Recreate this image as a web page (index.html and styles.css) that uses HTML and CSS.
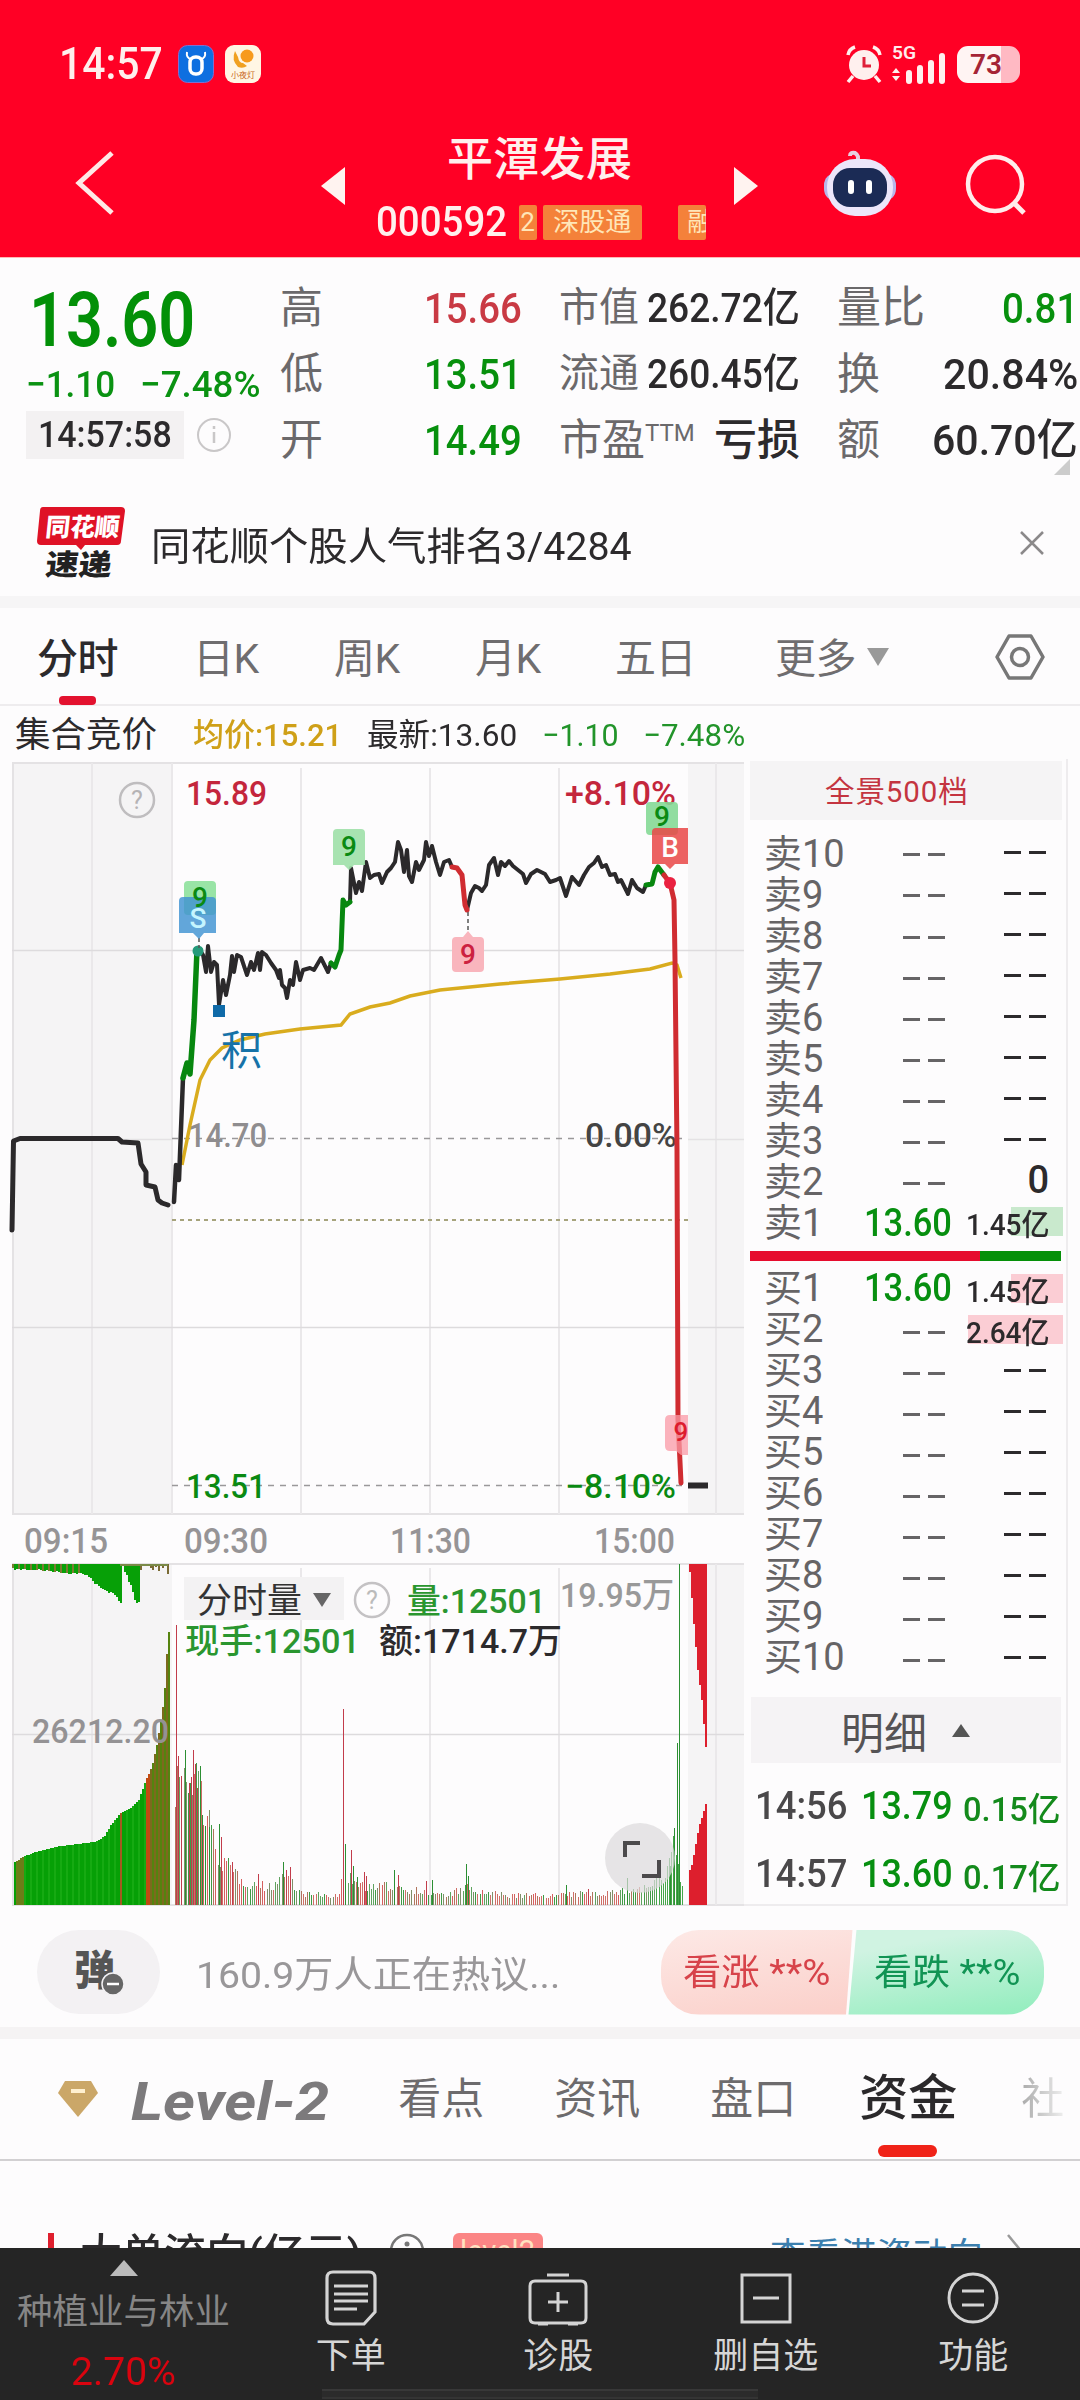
FILE: index.html
```html
<!DOCTYPE html>
<html lang="zh-CN">
<head>
<meta charset="utf-8">
<title>平潭发展 000592</title>
<link rel="stylesheet" href="styles.css">
</head>
<body>
<div class="app">
  <header class="top">
    <div class="status">
      <span class="clock" data-w="104">14:57</span>
      <svg class="app-ico" width="36" height="38" viewBox="0 0 36 38"><rect x=".5" y=".5" width="35" height="37" rx="9" fill="#0e6fe0" stroke="#7f6fd0"/><path d="M9 7q-1 6 4 7M27 7q1 6-4 7" fill="none" stroke="#fff" stroke-width="2"/><rect x="12" y="12" width="12" height="17" rx="5.500" fill="none" stroke="#fff" stroke-width="3.500"/></svg>
      <svg class="app-ico2" width="36" height="38" viewBox="0 0 36 38"><rect width="36" height="38" rx="9" fill="#fff6e4"/><circle cx="22" cy="11" r="6.5" fill="#f79a1c"/><path d="M10 6q-4 9 3 16q5 2 9-1l-4-3q-4 0-5-6z" fill="#f0a020"/><text x="18" y="33" font-size="8" text-anchor="middle" fill="#c8661d">小夜灯</text></svg>
      <div class="status-right">
        <svg width="38" height="40" viewBox="0 0 38 40"><circle cx="19" cy="21" r="15" fill="#fff0ee"/><path d="M19 13v9h7" fill="none" stroke="#e0203a" stroke-width="3"/><path d="M3 11Q4 5 10 3M35 11Q34 5 28 3M8 32l-5 6M30 32l5 6" fill="none" stroke="#fff0ee" stroke-width="3.5"/></svg>
        <svg class="signal" width="58" height="42" viewBox="0 0 58 42"><text x="1" y="16" font-size="18" font-weight="600" textLength="24" lengthAdjust="spacingAndGlyphs" fill="#ffecec">5G</text><path d="M1 30l4-5 4 5zM1 33l4 5 4-5z" fill="#fff0ee"/><path d="M18 38v-8M29 38v-13M40 38v-18M51 38v-25" stroke="#fff0ee" stroke-width="6" stroke-linecap="round"/></svg>
        <div class="battery"><b>73</b></div>
      </div>
    </div>
    <div class="nav">
      <svg class="back" width="44" height="68" viewBox="0 0 44 68"><path d="M38 4L5 34l33 30" fill="none" stroke="#ffe9e6" stroke-width="5"/></svg>
      <svg class="prev" width="24" height="38" viewBox="0 0 24 38"><path d="M0 19L24 0v38z" fill="#fff3f0"/></svg>
      <div class="stock">
        <div class="name">平潭发展</div>
        <div class="code-row"><span class="code" data-w="131">000592</span><span class="tag t1">2</span><span class="tag t2">深股通</span><span class="tag t3">融</span></div>
      </div>
      <svg class="next" width="24" height="38" viewBox="0 0 24 38"><path d="M24 19L0 0v38z" fill="#fff3f0"/></svg>
      <svg class="bot" width="74" height="68" viewBox="0 0 74 68"><path d="M34 13Q37 7 32 4q-5-1-5 3" fill="none" stroke="#e8cfe0" stroke-width="4"/><rect x="1" y="24" width="72" height="28" rx="12" fill="#b9b6ea"/><rect x="4" y="10" width="66" height="57" rx="28" fill="#ece6fa"/><rect x="10" y="19" width="54" height="39" rx="17" fill="#1b2b55"/><path d="M28 34v8M46 34v8" stroke="#fff" stroke-width="6" stroke-linecap="round"/></svg>
      <svg class="search" width="64" height="64" viewBox="0 0 64 64"><circle cx="31" cy="31" r="27" fill="none" stroke="#ffeceb" stroke-width="4.5"/><path d="M50 50l10 10" stroke="#ffeceb" stroke-width="5"/></svg>
    </div>
  </header>

  <section class="quote">
    <div class="q-main">
      <div class="price"><span data-w="166">13.60</span></div>
      <div class="chg"><span data-w="89">−1.10</span><span data-w="120">−7.48%</span></div>
      <div class="time-row"><span class="time-box"><span data-w="134">14:57:58</span></span>
        <svg width="36" height="36" viewBox="0 0 36 36"><circle cx="18" cy="18" r="16" fill="none" stroke="#c9c7c8" stroke-width="2"/><path d="M18 15v11M18 9v3" stroke="#c9c7c8" stroke-width="2.5"/></svg></div>
    </div>
    <div class="q-col c1">
      <div><label>高</label><span class="up" data-w="98">15.66</span></div>
      <div><label>低</label><span class="dn" data-w="98">13.51</span></div>
      <div><label>开</label><span class="dn" data-w="98">14.49</span></div>
    </div>
    <div class="q-col c2">
      <div><label class="sm">市值</label><span data-w="153">262.72亿</span></div>
      <div><label class="sm">流通</label><span data-w="153">260.45亿</span></div>
      <div><label>市盈<sup>TTM</sup></label><span class="cjk">亏损</span></div>
    </div>
    <div class="q-col c3">
      <div><label class="wide">量比</label><span class="dn" data-w="76">0.81</span></div>
      <div><label>换</label><span data-w="135">20.84%</span></div>
      <div><label>额</label><span data-w="146">60.70亿</span></div>
      <i class="corner"></i>
    </div>
  </section>

  <section class="banner">
    <svg width="92" height="76" viewBox="0 0 92 76"><path d="M8 2h78q4 0 4 4l-4 30q0 4-4 4H50l-4 5-5-5H6q-4 0-4-4L5 6q0-4 3-4z" fill="#df1226"/><g font-weight="900" transform="skewX(-6)"><text x="13" y="31" font-size="25" textLength="74" lengthAdjust="spacingAndGlyphs" fill="#fff">同花顺</text><text x="17" y="70" font-size="29" textLength="66" lengthAdjust="spacingAndGlyphs" fill="#222">速递</text></g></svg>
    <span class="banner-text" data-w="481">同花顺个股人气排名3/4284</span>
    <svg class="close" width="26" height="26" viewBox="0 0 26 26"><path d="M2 2l22 22M24 2L2 24" stroke="#8b898a" stroke-width="2.5"/></svg>
  </section>

  <nav class="periods">
    <span class="on">分时<i></i></span><span>日K</span><span>周K</span><span>月K</span><span>五日</span><span class="more">更多</span>
    <svg class="tri" width="24" height="20" viewBox="0 0 24 20"><path d="M1 1h22L12 19z" fill="#999"/></svg>
    <svg class="hex" width="50" height="48" viewBox="0 0 50 48"><path d="M14 3h22l12 21-12 21H14L2 24z" fill="none" stroke="#777" stroke-width="3.5" stroke-linejoin="round"/><circle cx="25" cy="24" r="8.5" fill="none" stroke="#777" stroke-width="3.5"/></svg>
  </nav>

  <div class="legend"><span class="l0">集合竞价</span><span class="l1" data-w="149">均价:15.21</span><span class="l2" data-w="150">最新:13.60</span><span class="l3" data-w="77">−1.10</span><span class="l4" data-w="102">−7.48%</span></div>

  <main class="market">
    <svg class="chart" width="744" height="1147" viewBox="0 759 744 1147">
      <g fill="#f5f4f5"><path d="M12 763h160v751H12zM688 763h56v751h-56zM12 1564h160v341H12zM688 1564h56v341h-56z"/></g>
      <g stroke="#e4e2e4" stroke-width="2" fill="none">
        <path d="M12 763H744M12 1514H744M12 1564H744M12 1905H744M13 763V1514M13 1564V1905"/>
        <path d="M92 763V1514M172 763V1514M301 768V1514M430 768V1514M559 768V1514M716 763V1514M92 1564V1905M301 1568V1905M430 1568V1905M559 1568V1905M716 1564V1905" stroke="#eae8ea"/>
        <path d="M12 950.500H744M12 1327.500H744M12 1734.500H744" stroke="#dddbdd" stroke-width="1.500"/>
        <path d="M12 1139.500H172M688 1139.500H744" stroke-width="1.500"/>
      </g>
      <path d="M172 1138.500H684M172 1485.500H684" stroke="#9a989a" stroke-width="1.600" stroke-dasharray="6 6"/>
      <path d="M172 1220H688" stroke="#a6a37c" stroke-width="2" stroke-dasharray="4 4"/>
      <g class="ink">
        <text x="186" y="805" font-size="34" textLength="81" lengthAdjust="spacingAndGlyphs" fill="#c4263c">15.89</text>
        <text x="565" y="805" font-size="34" textLength="111" lengthAdjust="spacingAndGlyphs" fill="#c4263c">+8.10%</text>
        <text x="188" y="1147" font-size="34" textLength="79" lengthAdjust="spacingAndGlyphs" fill="#8f8d8f">14.70</text>
        <text x="585" y="1147" font-size="34" textLength="92" lengthAdjust="spacingAndGlyphs" fill="#444">0.00%</text>
        <text x="186" y="1498" font-size="34" textLength="80" lengthAdjust="spacingAndGlyphs" fill="#0a8a12">13.51</text>
        <text x="565" y="1498" font-size="34" textLength="111" lengthAdjust="spacingAndGlyphs" fill="#0a8a12">−8.10%</text>
      </g>
      <circle cx="137" cy="800" r="17" fill="none" stroke="#bfbdbf" stroke-width="2.500"/><text x="137" y="809" font-size="25" text-anchor="middle" fill="#b5b3b5">?</text>
      <path d="M182 1165L190 1125L200 1080L210 1060L222 1048L240 1040L265 1034L300 1029L341 1025L350 1014L370 1007L390 1003L410 996L440 990L500 984L560 979L610 974L650 969L672 963L677 965L681 978" fill="none" stroke="#d9ac1e" stroke-width="3.500"/>
      <g fill="none" stroke-width="4.500" stroke-linejoin="round" stroke-linecap="round">
        <path d="M12 1230L13.500 1141L20 1138.500H118L122 1142L138 1143L141 1164L146 1172V1185L155 1187L158 1200L162 1203L168 1205" stroke="#2b292b" stroke-width="5"/>
        <path d="M174 1202L176 1165L179 1180L183 1078" stroke="#2b292b"/>
        <path d="M183 1078L187 1063L190 1074L194 1020L197 950H200" stroke="#07870f" stroke-width="5.500"/>
        <path d="M200 950L203 955L206 972L208 946L211 972L214 962L217 965L219 1005L223 980L226 995L230 975L232 956L234 972L237 955L241 957L244 966L247 975L251 962L254 970L258 953L260 970L262 952L266 955L271 963L276 970L279 978L280 970L282 985L285 988L287 998L290 980L293 985L296 962L300 980L303 970L310 968L314 970L321 958L328 972L331 963M350 902L351 868L356 893L359 882L362 891L366 862L370 878L374 875L379 874L382 883L387 872L391 868L395 862L398 842L401 850L404 872L407 850L409 876L412 882L416 862L419 870L424 860L426 842L429 856L432 846L436 862L440 875L444 862L449 860L452 867M467 910L471 893L475 886L479 888L482 891L486 885L489 865L494 858L498 875L501 862L505 866L509 861L513 866L518 870L523 874L526 883L531 874L537 870L545 874L550 882L556 880L560 878L566 896L572 877L579 885L584 875L589 867L594 863L598 857L602 867L606 865L610 875L615 874L618 882L621 880L628 894L632 880L637 888L643 892L646 885" stroke="#2b292b" stroke-width="4"/>
        <path d="M331 963L335 967L339 955L341 950L343 900L346 905L350 902M646 885L652 884L655 872L658 867L664 875" stroke="#07870f" stroke-width="5"/>
        <path d="M452 867L457 868L462 875L465 905L467 910M664 875L670 883L674 900L675 960L677 1150L678 1420L681 1483" stroke="#d02c31" stroke-width="5"/>
      </g>
      <circle cx="670" cy="883" r="6" fill="#ea2140"/><circle cx="198" cy="951" r="5.500" fill="#259a7a"/>
      <path d="M688 1485.500h20" stroke="#2b292b" stroke-width="6"/>
      <path d="M199 938v10M468 912v20" stroke="#555" stroke-width="1.500" stroke-dasharray="4 3"/>
      <g font-size="28" text-anchor="middle" class="mark">
        <rect x="184" y="881" width="32" height="34" rx="4" fill="#7fdd90" fill-opacity=".8"/>
        <path d="M183 897h29q4 0 4 4v32h-12l-5 6-6-6h-14v-32q0-4 4-4z" fill="#3f92d2" fill-opacity=".82"/>
        <text x="200" y="907" fill="#0a8a12">9</text><text x="198" y="928" fill="#c5f5ff">S</text>
        <path d="M337 829h24q4 0 4 4v32h-11l-5 5-5-5h-11v-32q0-4 4-4z" fill="#9fe0a8" fill-opacity=".9"/><text x="349" y="856" fill="#0a8a12">9</text>
        <path d="M456 937h7l5-6 5 6h7q4 0 4 4v27q0 4-4 4h-24q-4 0-4-4v-27q0-4 4-4z" fill="#f9b5bd"/><text x="468" y="964" fill="#cc2140">9</text>
        <rect x="646" y="802" width="32" height="33" rx="4" fill="#85d996" fill-opacity=".9"/>
        <path d="M656 828h32v36h-13l-5 5-5-5h-13v-32q0-4 4-4z" fill="#e94747" fill-opacity=".85"/>
        <text x="662" y="826" fill="#0a8a12">9</text><text x="670" y="857" fill="#fff">B</text>
        <path d="M688 1415h-18q-5 0-5 5v26q0 5 5 5h6l5 4h7z" fill="#fa9aa5" fill-opacity=".75"/><text x="681" y="1441" fill="#dd1c2e" font-size="26">9</text>
      </g>
      <rect x="213" y="1005" width="12" height="12" fill="#0f6aa8"/><text x="221" y="1065" font-size="41" fill="#1672a8">积</text>
      <g class="ink" font-size="35" fill="#969496">
        <text x="24" y="1553" textLength="84" lengthAdjust="spacingAndGlyphs">09:15</text><text x="184" y="1553" textLength="84" lengthAdjust="spacingAndGlyphs">09:30</text><text x="390" y="1553" textLength="81" lengthAdjust="spacingAndGlyphs">11:30</text><text x="594" y="1553" textLength="81" lengthAdjust="spacingAndGlyphs">15:00</text>
      </g>
      <g id="volume" shape-rendering="crispEdges"></g>
      <rect x="184" y="1577" width="160" height="43" fill="#f3f2f3"/>
      <text x="197" y="1613" font-size="35" fill="#333">分时量</text><path d="M313 1593h18l-9 14z" fill="#666"/>
      <circle cx="372" cy="1600" r="17" fill="none" stroke="#c4c2c4" stroke-width="2.500"/><text x="372" y="1609" font-size="25" text-anchor="middle" fill="#bbb">?</text>
      <g class="ink" font-size="34">
        <text x="407" y="1613" textLength="139" lengthAdjust="spacingAndGlyphs" fill="#2a962f">量:12501</text>
        <text x="560" y="1607" textLength="114" lengthAdjust="spacingAndGlyphs" fill="#999">19.95万</text>
        <text x="185" y="1653" textLength="175" lengthAdjust="spacingAndGlyphs" fill="#2a962f">现手:12501</text>
        <text x="379" y="1653" textLength="183" lengthAdjust="spacingAndGlyphs" fill="#2c2a2c">额:1714.7万</text>
        <text x="32" y="1743" textLength="137" lengthAdjust="spacingAndGlyphs" fill="#949294">26212.20</text>
      </g>
      <circle cx="640" cy="1858" r="35" fill="#dcdadc" fill-opacity=".7"/>
      <path d="M625 1857v-14h15M659 1860v16h-17" fill="none" stroke="#4c4a4c" stroke-width="4"/>
    </svg>

    <aside class="book">
      <div class="book-head">全景500档</div>
      <div id="asks" class="rows"></div>
      <div class="ratio"><i></i></div>
      <div id="bids" class="rows"></div>
      <div class="detail-head">明细<svg width="18" height="13" viewBox="0 0 18 13"><path d="M0 13L9 0l9 13z" fill="#555"/></svg></div>
      <div class="tick"><span class="t" data-w="92">14:56</span><span class="p" data-w="92">13.79</span><span class="v" data-w="97">0.15亿</span></div>
      <div class="tick"><span class="t" data-w="92">14:57</span><span class="p" data-w="92">13.60</span><span class="v" data-w="97">0.17亿</span></div>
    </aside>
  </main>

  <section class="talk">
    <div class="danmu"><svg width="50" height="50" viewBox="0 0 50 50"><text x="0" y="38" font-size="41" font-weight="900" fill="#555">弹</text><circle cx="39" cy="37" r="11" fill="#666" stroke="#f3f1f3" stroke-width="1.500"/><path d="M33 37h12" stroke="#fff" stroke-width="2.500"/></svg></div>
    <span class="talk-text" data-w="364">160.9万人正在热议...</span>
    <div class="vote"><span class="bull"><b data-w="147">看涨 **%</b></span><span class="bear"><b data-w="146">看跌 **%</b></span></div>
  </section>

  <nav class="tabs2">
    <svg class="gem" width="42" height="38" viewBox="0 0 42 38"><path d="M8 1h26l7 12-20 24L1 13z" fill="#cba768"/><path d="M14 11h14" stroke="#fff0d0" stroke-width="4"/></svg>
    <span class="lv" data-w="198">Level-2</span><span>看点</span><span>资讯</span><span>盘口</span><span class="on">资金<i></i></span><span class="fade">社</span>
  </nav>

  <section class="flow">
    <i class="mark-bar"></i><span class="flow-title" data-w="282">大单流向(亿元)</span>
    <svg class="flow-info" width="36" height="36" viewBox="0 0 36 36"><circle cx="18" cy="18" r="16" fill="none" stroke="#777" stroke-width="2.500"/><circle cx="18" cy="11" r="2.500" fill="#777"/><path d="M18 15v12" stroke="#777" stroke-width="3"/></svg>
    <span class="lvl-tag">level2</span>
    <span class="link">查看港资动向</span>
    <svg class="chev" width="18" height="38" viewBox="0 0 18 38"><path d="M2 2l14 17L2 36" fill="none" stroke="#999" stroke-width="2.500"/></svg>
  </section>

  <footer class="bar">
    <div class="industry"><svg width="28" height="16" viewBox="0 0 28 16"><path d="M0 16L14 0l14 16z" fill="#bbb"/></svg><span class="ind">种植业与林业</span><span class="pct" data-w="105">2.70%</span></div>
    <div class="act a1"><svg width="58" height="58" viewBox="0 0 58 58"><path d="M11 3h36q6 0 6 6v34L42 55H11q-6 0-6-6V9q0-6 6-6zM12 17h34M12 25h34M12 32h34M12 40h23" fill="none" stroke="#d4d4d4" stroke-width="3.200"/></svg><span>下单</span></div>
    <div class="act a2"><svg width="58" height="58" viewBox="0 0 58 58"><path d="M6 12h46q5 0 5 5v32q0 5-5 5H6q-5 0-5-5V17q0-5 5-5zM18 6h22M29 23v20M19 33h20M9 55h10M39 55h10" fill="none" stroke="#d4d4d4" stroke-width="3"/></svg><span>诊股</span></div>
    <div class="act a3"><svg width="58" height="58" viewBox="0 0 58 58"><path d="M5 6h48v47H5zM16 29h26" fill="none" stroke="#d4d4d4" stroke-width="3"/></svg><span>删自选</span></div>
    <div class="act a4"><svg width="58" height="58" viewBox="0 0 58 58"><circle cx="29" cy="29" r="24" fill="none" stroke="#d4d4d4" stroke-width="3"/><path d="M18 22h22M18 36h22" stroke="#d4d4d4" stroke-width="3.200"/></svg><span>功能</span></div>
    <i class="home"></i>
  </footer>
</div>
<script src="app.js"></script>
</body>
</html>
```

FILE: styles.css
```css
* { box-sizing: border-box; }
body {
  margin: 0;
  background: #fdfcfd;
  font-family: Roboto, "Noto Sans CJK SC", sans-serif;
  color: #2c2a2c;
}
svg { display: block; flex: none; overflow: visible; }
svg text { font-family: Roboto, "Noto Sans CJK SC", sans-serif; }
.ink text, .mark text { font-weight: 500; }
i { font-style: normal; }
.app { width: 1080px; height: 2400px; overflow: hidden; display: flex; flex-direction: column; position: relative; }
.app > * { flex: none; }
[data-w] { display: inline-block; white-space: nowrap; transform-origin: left center; flex: none; }

.top { height: 258px; background: #ff0025; border-bottom: 1px solid #ffb9b5; }
.status { height: 128px; padding: 0 60px 0 59px; display: flex; align-items: center; color: #ffefec; }
.clock { font-size: 44px; line-height: 46px; font-weight: 500; }
.app-ico { margin-left: 15px; }
.app-ico2 { margin-left: 11px; }
.status-right { margin-left: auto; display: flex; align-items: center; }
.signal { margin-left: 8px; }
.battery { margin-left: 8px; width: 63px; height: 37px; border-radius: 11px; padding-left: 13px; background: linear-gradient(90deg, #fff4f3 44px, #ffb9c3 44px); color: #a52435; font-size: 28px; line-height: 37px; }
.battery b { font-weight: 600; }
.nav { height: 128px; display: flex; align-items: flex-start; }
.back { margin: 21px 0 0 74px; }
.prev { margin: 39px 0 0 203px; }
.stock { width: 362px; margin: 4px 0 0 31px; color: #fff0ed; overflow: hidden; }
.name { margin-left: 71px; font-size: 46px; line-height: 54px; font-weight: 500; letter-spacing: .3px; }
.code-row { display: flex; align-items: center; height: 72px; }
.code { font-size: 42px; line-height: 44px; font-weight: 500; }
.tag { height: 35px; background: #f4813a; color: #ffe6b8; font-size: 26px; line-height: 34px; overflow: hidden; white-space: nowrap; border-radius: 2px; }
.t1 { width: 18px; margin-left: 12px; padding-left: 1px; }
.t2 { width: 99px; margin-left: 6px; padding-left: 10px; }
.t3 { width: 28px; margin-left: 36px; padding-left: 9px; }
.next { margin: 39px 0 0 -4px; }
.bot { margin: 21px 0 0 65px; }
.search { margin: 25px 0 0 67px; }

.quote { height: 230px; display: flex; padding: 17px 1px 0 26px; }
.q-main { width: 254px; }
.price { height: 91px; font-size: 76px; line-height: 90px; font-weight: 600; color: #039008; padding-left: 3px; }
.chg { display: flex; gap: 25px; height: 38px; font-size: 37px; line-height: 38px; font-weight: 500; color: #0a9212; }
.time-row { display: flex; align-items: center; margin-top: 7px; gap: 12px; }
.time-box { width: 158px; height: 48px; background: #f3f1f2; padding-left: 12px; font-size: 37px; line-height: 48px; font-weight: 500; }
.q-col { position: relative; }
.q-col > div { display: flex; justify-content: space-between; height: 66px; line-height: 66px; font-size: 43px; font-weight: 500; }
.q-col label { color: #6b696b; font-weight: 400; white-space: nowrap; }
.q-col label.sm { font-size: 40px; }
.q-col label.wide { font-size: 44px; }
.q-col sup { font-size: 24px; line-height: 1; vertical-align: 14px; }
.c1 { width: 242px; }
.c2 { width: 241px; margin-left: 37px; }
.c2 > div { font-size: 41px; }
.c2 .cjk, .c2 div:last-child label { font-size: 43px; }
.c3 { width: 241px; margin-left: 37px; }
.up { color: #c93a44; }
.dn { color: #07900d; }
.corner { position: absolute; right: 8px; top: 184px; border-left: 16px solid transparent; border-bottom: 16px solid #ccc; }

.banner { height: 108px; display: flex; align-items: center; padding: 1px 35px 0 35px; }
.banner-text { margin-left: 24px; font-size: 39px; }
.close { margin-left: auto; }

.periods { height: 110px; border-top: 12px solid #f6f5f6; border-bottom: 2px solid #eeecee; display: flex; align-items: center; padding: 2px 35px 0 37px; font-size: 41px; color: #6f6d6f; position: relative; }
.periods > span { line-height: 96px; letter-spacing: -.5px; padding-top: 4px; margin-top: -4px; margin-bottom: -4px; }
.periods > .on { color: #2c2a2c; font-weight: 500; position: relative; width: 156px; }
.periods .on i { position: absolute; left: 22px; bottom: 2px; width: 37px; height: 9px; border-radius: 4px; background: #e3122f; }
.periods > span:nth-child(2) { width: 141px; }
.periods > span:nth-child(3) { width: 141px; }
.periods > span:nth-child(4) { width: 140px; }
.periods > span:nth-child(5) { width: 160px; }
.more { width: 91px; }
.hex { margin-left: auto; }

.legend { height: 53px; display: flex; align-items: center; padding: 6px 0 0 15px; font-size: 32px; line-height: 47px; font-weight: 400; }
.l0 { font-size: 35.500px; }
.l1 { margin-left: 36px; color: #cfa018; font-weight: 500; }
.l2 { margin-left: 25px; }
.l3 { margin-left: 25px; color: #22942a; }
.l4 { margin-left: 24px; color: #22942a; }

.market { display: flex; height: 1147px; }
.book { width: 324px; border-right: 2px solid #eeecee; border-bottom: 2px solid #eeecee; padding: 2px 4px 0 6px; }
.book-head { height: 59px; line-height: 62px; padding-left: 75px; background: #f5f4f5; color: #c43440; font-size: 29.500px; letter-spacing: .9px; }
.rows:nth-child(2) { margin-top: 12px; }
.row { display: grid; grid-template-columns: 114px 83px 116px; height: 41.02px; line-height: 41px; align-items: center; }
.row .lab { padding-left: 14px; font-size: 38px; color: #666466; white-space: nowrap; }
#asks .lab { position: relative; top: 1.500px; }
.row .px { text-align: right; font-size: 38px; font-weight: 500; color: #078f10; margin-right: 2px; }
#asks .row:last-child .px { position: relative; top: 2px; }
.row .px .none { margin-right: 0; }
.row .vol { display: flex; justify-content: flex-end; align-items: center; position: relative; height: 41px; padding-right: 14px; font-size: 30px; font-weight: 500; }
.row .vol .txt { position: relative; top: 3px; }
.row .zero { font-size: 38px; font-weight: 500; }
.depth { position: absolute; right: 0; top: 6px; height: 29px; }
.depth.ask { background: #c9e9cd; }
.depth.bid { background: #fbcdd4; }
.none { display: inline-flex; gap: 8px; vertical-align: middle; color: #666466; }
.none::before, .none::after { content: ""; width: 17px; height: 3px; background: currentColor; }
.vol .none { color: #2c2a2c; margin-right: 3px; }
.ratio { height: 10px; margin: 9px 1px 7px 0; background: #059009; }
.ratio i { display: block; width: 230px; height: 10px; background: #e60c2d; }
.detail-head { display: flex; align-items: center; gap: 25px; height: 66px; margin: 19px 1px 9px 1px; padding-left: 90px; background: #f5f3f5; color: #555355; font-size: 43px; }
.tick { display: flex; align-items: center; height: 67.5px; padding-left: 5px; font-weight: 500; }
.tick .t { font-size: 38px; color: #4a484a; }
.tick .p { font-size: 39px; color: #078f10; margin-left: 14px; }
.tick .v { font-size: 33px; color: #148a1c; margin-left: 10px; position: relative; top: 1px; }

.talk { height: 121px; padding: 0 36px 0 37px; display: flex; align-items: center; padding-bottom: 1px; }
.danmu { width: 123px; height: 84px; margin-top: 12px; border-radius: 42px; background: #f3f1f3; display: flex; justify-content: center; align-items: center; }
.talk-text { margin: 12px 0 0 36px; font-size: 37px; color: #999799; }
.vote { margin: 12px 0 0 auto; width: 383px; height: 85px; position: relative; border-radius: 38px; overflow: hidden; display: flex; font-size: 36px; line-height: 86px; }
.vote span { height: 85px; }
.vote b { font-weight: 400; }
.bull { width: 193px; padding-left: 22px; color: #d7434a; background: linear-gradient(170deg, #fde9e6, #fbcfc9); clip-path: polygon(0 0, 100% 0, 185px 100%, 0 100%); }
.bear { width: 198px; margin-left: -5px; padding-left: 26px; color: #119454; background: linear-gradient(170deg, #d0f3e2 20%, #90edbc); clip-path: polygon(9px 0, 100% 0, 100% 100%, 1px 100%); }

.tabs2 { height: 134px; border-top: 12px solid #f5f3f4; border-bottom: 2px solid #d2d0d2; display: flex; align-items: center; padding-left: 57px; font-size: 43px; line-height: 120px; color: #6d6b6d; position: relative; }
.tabs2 > span { padding-top: 5px; margin-top: -5px; }
.gem { margin-top: -1px; }
.tabs2 > .lv { font-size: 54px; font-weight: 700; font-style: italic; color: #7c7a7c; margin-left: 32px; line-height: 64px; margin-top: 0; }
.tabs2 > span:nth-child(3) { width: 156px; margin-left: 69px; }
.tabs2 > span:nth-child(4) { width: 156px; }
.tabs2 > span:nth-child(5) { width: 149px; }
.tabs2 .on { font-size: 49px; color: #2b292b; font-weight: 500; position: relative; width: 162px; }
.tabs2 .on i { position: absolute; left: 19px; bottom: 2px; width: 59px; height: 12px; border-radius: 6px; background: #f02318; }
.fade { color: transparent; background: linear-gradient(90deg, #aaa, #eee); -webkit-background-clip: text; background-clip: text; }

.flow { height: 87px; padding: 72px 56px 0 48px; display: flex; align-items: flex-start; overflow: hidden; }
.mark-bar { width: 6px; height: 36px; background: #df1f2e; }
.flow-title { margin: -4px 0 0 26px; font-size: 41px; line-height: 50px; font-weight: 500; }
.flow-info { margin-left: 27px; }
.lvl-tag { margin-left: 28px; width: 90px; height: 36px; border-radius: 6px; background: #fb8585; color: #ffe2c0; font-size: 29px; line-height: 36px; text-align: center; }
.link { margin-left: auto; font-size: 35.500px; line-height: 46px; margin-top: 0; color: #3c7fae; }
.chev { margin-left: 23px; }

.bar { height: 153px; background: #252525; color: #d6d6d6; position: relative; display: flex; }
.industry { width: 247px; display: flex; flex-direction: column; align-items: center; padding-top: 12px; }
.ind { font-size: 35.500px; line-height: 44px; color: #868686; margin-top: 14px; }
.pct { font-size: 38px; line-height: 44px; color: #d9040f; margin-top: 16px; }
.act { display: flex; flex-direction: column; align-items: center; width: 207.500px; padding-top: 21px; font-size: 35px; }
.act span { line-height: 44px; margin-top: 8px; }
.home { position: absolute; left: 322px; bottom: 2px; width: 436px; height: 10px; background: #2b2b2b; border-top: 2px solid #383838; border-bottom: 2px solid #343434; }
```

FILE: app.js
```js
const svgNS = "http://www.w3.org/2000/svg";

// order book rows
function bookRow(side, level, price, vol, depth) {
  const none = '<span class="none"></span>';
  const label = (side === "ask" ? "卖" : "买") + level;
  const px = price ? `<span data-w="88">${price}</span>` : none;
  let v = none;
  if (vol === "0") v = '<span class="zero">0</span>';
  else if (vol) v = `<span class="txt" data-w="84">${vol}</span>`;
  const bg = depth ? `<i class="depth ${side}" style="width:${depth}px"></i>` : "";
  return `<div class="row"><span class="lab">${label}</span><span class="px">${px}</span><span class="vol">${bg}${v}</span></div>`;
}
let asks = "", bids = "";
for (let i = 10; i >= 3; i--) asks += bookRow("ask", i);
asks += bookRow("ask", 2, "", "0") + bookRow("ask", 1, "13.60", "1.45亿", 52);
bids += bookRow("bid", 1, "13.60", "1.45亿", 52) + bookRow("bid", 2, "", "2.64亿", 95);
for (let i = 3; i <= 10; i++) bids += bookRow("bid", i);
document.getElementById("asks").innerHTML = asks;
document.getElementById("bids").innerHTML = bids;

// volume pane
const vol = document.getElementById("volume");
function bar(x, y1, y2, w, fill) {
  const r = document.createElementNS(svgNS, "rect");
  r.setAttribute("x", x); r.setAttribute("y", y1);
  r.setAttribute("width", w); r.setAttribute("height", y2 - y1);
  r.setAttribute("fill", fill);
  vol.appendChild(r);
}
function at(points, x) {
  for (let i = 1; i < points.length; i++) {
    const [x0, y0] = points[i - 1], [x1, y1] = points[i];
    if (x <= x1) return y0 + (y1 - y0) * Math.max(0, x - x0) / (x1 - x0);
  }
  return points[points.length - 1][1];
}
let seed = 7;
const rnd = () => (seed = (seed * 16807) % 2147483647) / 2147483647;

const auction = [[14, 1862], [22, 1857], [35, 1852], [60, 1846], [85, 1843], [97, 1841], [104, 1836], [110, 1825], [120, 1813], [130, 1808], [138, 1800], [145, 1780], [151, 1767], [156, 1745], [160, 1720], [163, 1700], [165, 1675], [167, 1632]];
for (let x = 14; x < 169; x += 2) {
  let c = x % 6 === 0 ? "#16aa12" : "#06a006";
  if (x < 24 && x > 15) c = "#6c7d18";
  if (x === 120) c = "#a35a20";
  if (x >= 146 && x <= 149) c = "#c14a12";
  if (x > 149) c = x % 4 === 0 ? "#55830f" : "#7c6a1e";
  bar(x, at(auction, x), 1905, 2, c);
}
const hang = [[12, 1568], [40, 1569], [60, 1571], [80, 1573], [88, 1575], [95, 1583], [105, 1590], [112, 1592], [117, 1597], [120, 1602]];
for (let x = 12; x < 121; x += 2) bar(x, 1564, at(hang, x) + rnd() * 2, 2, x < 80 && x % 6 === 0 ? "#7c7a30" : "#07a007");
[[124, 1572], [126, 1575], [128, 1582], [130, 1585], [132, 1592], [134, 1600], [136, 1603], [138, 1602], [140, 1570], [150, 1568], [152, 1570], [155, 1567], [158, 1571], [162, 1568], [167, 1574]].forEach(([x, y]) => bar(x, 1564, y, 2, x < 140 ? "#07a007" : "#7a6a34"));
bar(120, 1564, 1566, 48, "#7a8a48");

const base = [[175, 1825], [177, 1785], [184, 1790], [190, 1785], [200, 1785], [204, 1812], [212, 1842], [219, 1856], [226, 1868], [240, 1879], [255, 1886], [270, 1888], [283, 1876], [292, 1882], [300, 1894], [337, 1897], [345, 1872], [352, 1882], [372, 1889], [394, 1886], [410, 1890], [445, 1896], [466, 1889], [480, 1893], [510, 1896], [550, 1896], [590, 1894], [615, 1893], [640, 1890], [655, 1884], [665, 1876], [673, 1850], [681, 1888]];
const colors = ["#d65f5f", "#5fa35f", "#b0745c", "#3f9a45", "#cf6e66", "#7f8f68"];
for (let i = 0; i < 239; i++) {
  const x = Math.round(175 + i * 2.13);
  const b = at(base, x), h = 1905 - b;
  const y = b + (rnd() - .55) * h * .6;
  const c = x > 654 ? "#45a64a" : colors[Math.floor(rnd() * colors.length)];
  bar(x, y, 1905, 1, c);
}
[[176, 1625, 0], [178, 1756, 0], [181, 1776, 0], [185, 1750, 1], [189, 1783, 0], [191, 1777, 0], [193, 1750, 0], [195, 1764, 0], [197, 1788, 0], [200, 1766, 1], [202, 1815, 1], [205, 1826, 1], [209, 1827, 1], [219, 1824, 1], [221, 1837, 0], [232, 1862, 0], [258, 1874, 0], [283, 1862, 1], [286, 1870, 0], [290, 1867, 0], [343, 1709, 0], [345, 1844, 1], [351, 1850, 0], [353, 1866, 1], [357, 1877, 1], [364, 1872, 0], [366, 1876, 0], [394, 1870, 1], [398, 1875, 0], [426, 1881, 0], [432, 1880, 1], [466, 1864, 1], [468, 1876, 1], [566, 1885, 1], [588, 1889, 0], [627, 1878, 1], [670, 1866, 1], [674, 1828, 1], [677, 1743, 1], [679, 1564, 1]].forEach(([x, y, g]) => bar(x, y, 1905, 1, g ? "#2c8f33" : "#c23c4b"));

const upper = [[689, 1572], [693, 1624], [697, 1670], [701, 1700], [705, 1747]];
const lower = [[690, 1870], [694, 1850], [698, 1827], [702, 1815], [705, 1804]];
for (let x = 689; x < 706; x += 2) {
  bar(x, 1564, at(upper, x), 2, "#dd1f2d");
  bar(x, at(lower, x), 1905, 2, "#dd1f2d");
}

// squeeze figures to their column widths
document.querySelectorAll("[data-w]").forEach(el => {
  const want = +el.dataset.w, have = el.offsetWidth;
  el.style.transform = `scaleX(${want / have})`;
  el.style.marginRight = `${want - have}px`;
});
```
